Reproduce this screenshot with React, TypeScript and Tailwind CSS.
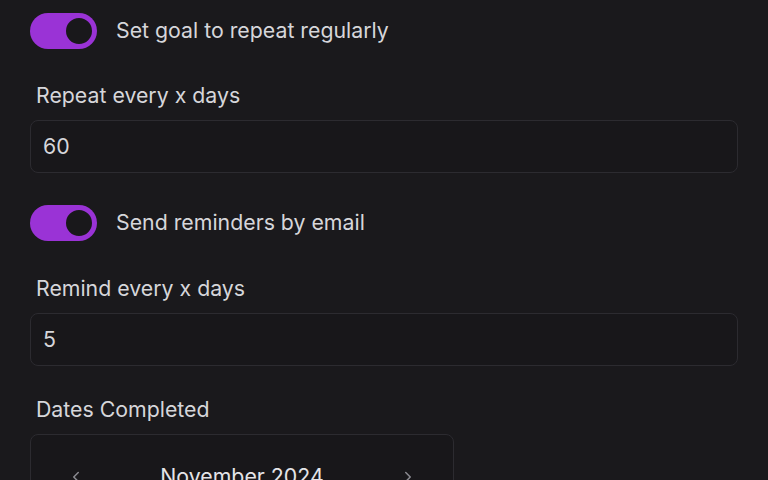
import React from 'react';
import { ChevronLeft, ChevronRight } from 'lucide-react';

const Toggle: React.FC<{ label: string }> = ({ label }) => (
  <div className="flex items-center gap-[19px]">
    <div className="w-[67px] h-[36px] rounded-full bg-[#9a33d6] flex items-center justify-end pr-[2px]">
      <div className="w-[32px] h-[32px] rounded-full bg-[#19181b] border-[3px] border-[#9a33d6]" />
    </div>
    <span className="text-[21.3px] text-[#d6d6da]">{label}</span>
  </div>
);

const Field: React.FC<{ label: string; value: string }> = ({ label, value }) => (
  <div className="flex flex-col">
    <span className="text-[21.3px] text-[#d6d6da] pl-[6px] leading-[28px]">{label}</span>
    <div className="mt-[11px] h-[53px] rounded-lg border border-[#2c2b30] bg-[#18171a] flex items-center px-[12px]">
      <span className="text-[21.3px] text-[#d6d6da]">{value}</span>
    </div>
  </div>
);

const App: React.FC = () => {
  return (
    <div
      className="w-[768px] h-[480px] overflow-hidden bg-[#1a191c] px-[30px] pt-[13px]"
      style={{ fontFamily: 'Inter, "Noto Sans", sans-serif' }}
    >
      <Toggle label="Set goal to repeat regularly" />
      <div className="mt-[32px]">
        <Field label="Repeat every x days" value="60" />
      </div>
      <div className="mt-[32px]">
        <Toggle label="Send reminders by email" />
      </div>
      <div className="mt-[33px]">
        <Field label="Remind every x days" value="5" />
      </div>
      <div className="mt-[29px] flex flex-col">
        <span className="text-[21.3px] text-[#d6d6da] pl-[6px] leading-[28px]">Dates Completed</span>
        <div className="mt-[11px] w-[424px] h-[120px] rounded-lg border border-[#2c2b30] bg-[#18171a] px-[36px] pt-[26px]">
          <div className="flex items-center justify-between">
            <ChevronLeft className="w-[18px] h-[18px] text-[#8a8a90]" />
            <span className="text-[21.3px] text-[#e4e4e7]">November 2024</span>
            <ChevronRight className="w-[18px] h-[18px] text-[#8a8a90]" />
          </div>
        </div>
      </div>
    </div>
  );
};

export default App;
